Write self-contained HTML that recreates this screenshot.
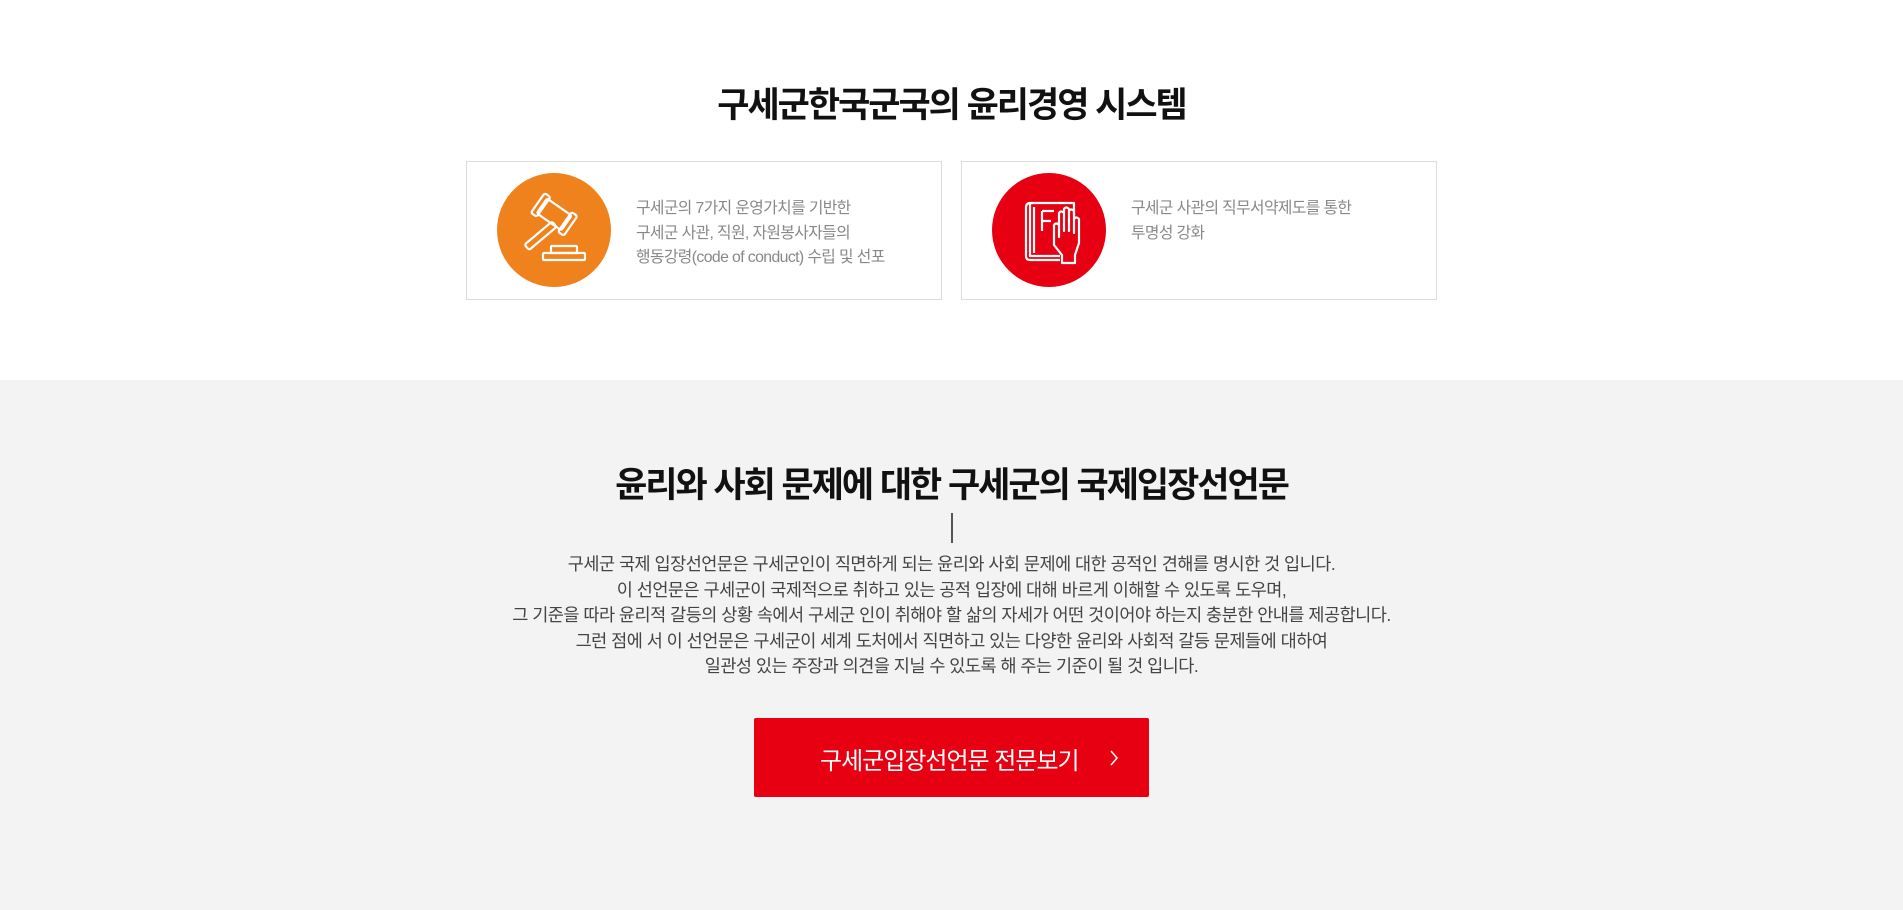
<!DOCTYPE html>
<html><head><meta charset="utf-8"><style>
*{margin:0;padding:0;box-sizing:border-box}
body{width:1903px;height:910px;background:#fff;font-family:"Liberation Sans","Noto Sans CJK KR",sans-serif;position:relative;overflow:hidden}
.t1{position:absolute;top:77px;left:0;width:1903px;text-align:center;font-size:35px;font-weight:bold;color:#111;letter-spacing:-2px}
.card{position:absolute;top:161px;width:476px;height:139px;border:1px solid #ddd;background:#fff}
.circ{position:absolute;left:30px;top:11px;width:114px;height:114px;border-radius:50%}
.ct{position:absolute;left:169px;top:35px;font-size:15.8px;line-height:24.5px;color:#888;letter-spacing:-0.6px}
.gray{position:absolute;top:380px;left:0;width:1903px;height:530px;background:#f3f3f3}
.t2{position:absolute;top:457px;left:0;width:1903px;text-align:center;font-size:35px;font-weight:bold;color:#111;letter-spacing:-2px}
.vl{position:absolute;left:951px;top:513px;width:2px;height:30px;background:#555}
.p{position:absolute;top:552px;left:0;width:1903px;text-align:center;font-size:17.5px;line-height:25.5px;color:#444;letter-spacing:-0.5px}
.btn{position:absolute;left:754px;top:718px;width:395px;height:79px;background:#e60012;border-radius:2px;color:#fff;font-size:24px;letter-spacing:-1px}
.btn span{position:absolute;left:66px;top:23px}
.btn svg{position:absolute;left:355px;top:32px}
</style></head><body>
<div class="t1">구세군한국군국의 윤리경영 시스템</div>
<div class="card" style="left:466px">
 <div class="circ" style="background:#f0821e">
 <svg width="114" height="114" viewBox="0 0 114 114" fill="none" stroke="#fff" stroke-width="2.2" stroke-linejoin="round">
  <g transform="rotate(35 58 42)">
   <rect x="42" y="33" width="30" height="18" rx="2"/>
   <rect x="37" y="30" width="7" height="24" rx="2"/>
   <rect x="70" y="30" width="7" height="24" rx="2"/>
  </g>
  <g transform="rotate(50 50 58)"><rect x="46" y="48" width="7" height="36" rx="2"/></g>
  <rect x="54" y="73" width="26" height="7" rx="1"/>
  <rect x="46" y="80" width="42" height="7" rx="1"/>
 </svg></div>
 <div class="ct">구세군의 7가지 운영가치를 기반한<br>구세군 사관, 직원, 자원봉사자들의<br>행동강령(code of conduct) 수립 및 선포</div>
</div>
<div class="card" style="left:961px">
 <div class="circ" style="background:#e60012">
 <svg width="114" height="114" viewBox="0 0 114 114" fill="none" stroke="#fff" stroke-width="2.2" stroke-linejoin="round">
  <path d="M38 30h44v12M38 30q-4 0-4 5v48q0 4 4 4h30M38 30v53h30M42 34v46"/>
  <path d="M50 38h12M50 38v20M50 48h9"/>
  <path d="M70 90v-8l-8-10v-20q2-3 5 0v12v-24q2-3 5 0v18v-22q2-3 5 0v22v-20q2-3 5 0v22v-14q2-3 5 0v24l-4 12v8z"/>
 </svg></div>
 <div class="ct">구세군 사관의 직무서약제도를 통한<br>투명성 강화</div>
</div>
<div class="gray"></div>
<div class="t2">윤리와 사회 문제에 대한 구세군의 국제입장선언문</div>
<div class="vl"></div>
<div class="p">구세군 국제 입장선언문은 구세군인이 직면하게 되는 윤리와 사회 문제에 대한 공적인 견해를 명시한 것 입니다.<br>이 선언문은 구세군이 국제적으로 취하고 있는 공적 입장에 대해 바르게 이해할 수 있도록 도우며,<br>그 기준을 따라 윤리적 갈등의 상황 속에서 구세군 인이 취해야 할 삶의 자세가 어떤 것이어야 하는지 충분한 안내를 제공합니다.<br>그런 점에 서 이 선언문은 구세군이 세계 도처에서 직면하고 있는 다양한 윤리와 사회적 갈등 문제들에 대하여<br>일관성 있는 주장과 의견을 지닐 수 있도록 해 주는 기준이 될 것 입니다.</div>
<div class="btn"><span>구세군입장선언문 전문보기</span><svg width="10" height="16" viewBox="0 0 10 16"><path d="M2 1l6 7-6 7" fill="none" stroke="#fff" stroke-width="1.5"/></svg></div>
</body></html>
